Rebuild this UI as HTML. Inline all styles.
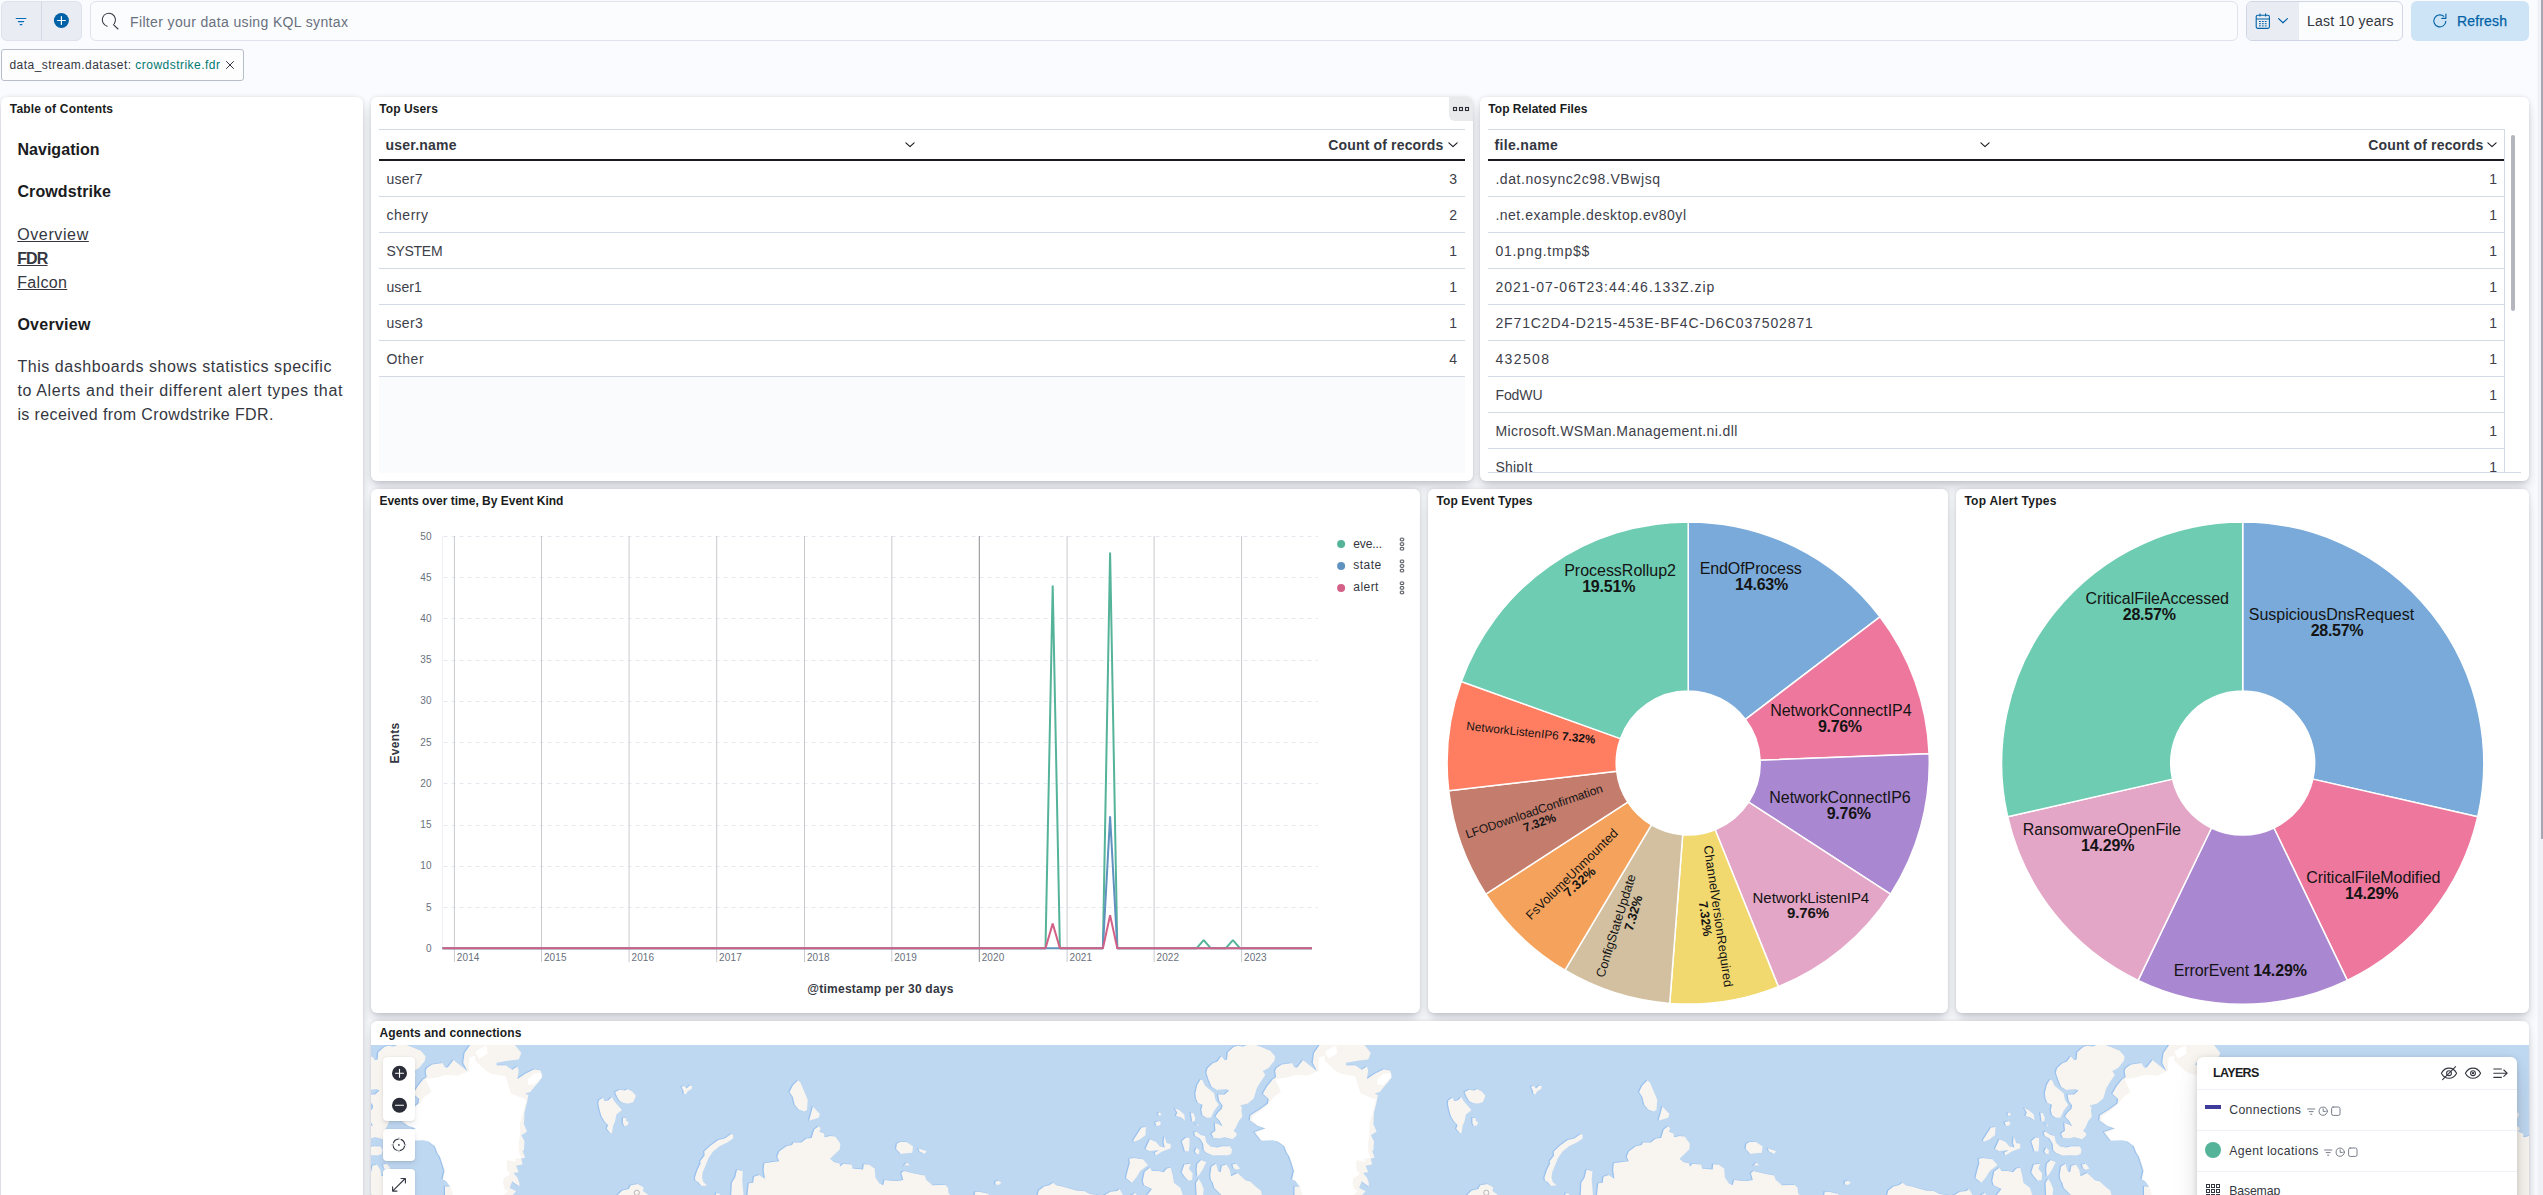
<!DOCTYPE html>
<html lang="en">
<head>
<meta charset="utf-8">
<title>[Crowdstrike] FDR Overview</title>
<style>

*{box-sizing:border-box;margin:0;padding:0}
html,body{width:2543px;height:1195px;overflow:hidden;background:#fafbfe}
body{font-family:"Liberation Sans",sans-serif;color:#343741;font-size:14px;-webkit-font-smoothing:antialiased}
#app{position:relative;width:2543px;height:1195px;overflow:hidden;background:#fafbfe}
.panel{position:absolute;background:#fff;border-radius:6px;box-shadow:0 .9px 4px -1px rgba(0,0,40,.115),0 2.6px 8px -1px rgba(0,0,40,.09),0 5.7px 12px -1px rgba(0,0,40,.075),0 15px 15px -1px rgba(0,0,40,.06);}
.panel>h2{position:absolute;left:8px;top:3px;font-size:12px;line-height:18px;font-weight:700;color:#1a1c21;white-space:nowrap}
.vscroll{position:absolute;left:2537px;top:0;width:6px;height:1195px;background:linear-gradient(90deg,#f5f6fa 0,#f5f6fa 1px,#f0f1f6 1px)}
.vthumb{position:absolute;left:4px;top:0;width:2px;height:839px;background:#a6a7b2}
svg{display:block;position:absolute;overflow:visible}
svg text{font-family:"Liberation Sans",sans-serif}

</style>
</head>
<body>
<div id="app">
<div class="fgroup" style="position:absolute;left:1px;top:1px;width:81px;height:40px;background:#e9edf3;border:1px solid #dde2ec;border-radius:6px"></div>
<div style="position:absolute;left:41px;top:2px;width:1px;height:38px;background:#d3dae6"></div>
<svg style="left:13px;top:13px" width="16" height="16" viewBox="0 0 16 16"><g stroke="#006bb8" stroke-width="1.2" stroke-linecap="round" fill="none"><path d="M3.2 5.5h9.6M5.4 8.6h5.2M7.2 11.7h1.6"/></g></svg>
<svg style="left:53px;top:13px" width="16" height="16" viewBox="0 0 16 16"><circle cx="8.4" cy="7.5" r="7.5" fill="#0061a6"/><path d="M8.4 3.6v7.8M4.5 7.5h7.8" stroke="#fff" stroke-width="1.2" stroke-linecap="round"/></svg>
<div class="search" style="position:absolute;left:90px;top:1px;width:2148px;height:40px;background:#fbfcfd;border:1px solid #dfe3ee;border-radius:6px"></div>
<svg style="left:0;top:0" width="130" height="42" viewBox="0 0 130 42"><path d="M107.2 26.2A6.600 6.600 0 1 1 114.3 23.600" stroke="#343741" stroke-width="1.050" fill="none" stroke-linecap="round"/><path d="M113.4 24.6l4.600 4.400" stroke="#343741" stroke-width="1.050" stroke-linecap="round"/></svg>
<div style="position:absolute;left:130.00px;top:11.95px;font-size:14px;line-height:21px;font-weight:400;letter-spacing:0.360px;color:#69707d;white-space:nowrap;">Filter your data using KQL syntax</div>
<div style="position:absolute;left:2246px;top:1px;width:157px;height:40px;background:#fbfcfd;border:1px solid #d0d6e6;border-radius:6px;overflow:hidden"><div style="position:absolute;left:0;top:0;width:52px;height:38px;background:#e9edf3"></div></div>
<svg style="left:2255px;top:13px" width="16" height="17" viewBox="0 0 16 17"><g fill="none" stroke="#0061a6" stroke-width="1.1"><rect x="1.2" y="2.2" width="13.2" height="13.2" rx="1.6"/><path d="M1.2 6h13.2M5 0.6v3M10.6 0.6v3"/></g><g fill="#0061a6"><rect x="4" y="8" width="1.8" height="1"/><rect x="6.9" y="8" width="1.8" height="1"/><rect x="9.8" y="8" width="1.8" height="1"/><rect x="4" y="10.2" width="1.8" height="1"/><rect x="6.9" y="10.2" width="1.8" height="1"/><rect x="9.8" y="10.2" width="1.8" height="1"/><rect x="4" y="12.4" width="1.8" height="1"/><rect x="6.9" y="12.4" width="1.8" height="1"/><rect x="9.8" y="12.4" width="1.8" height="1"/></g></svg>
<svg style="left:2277px;top:16px" width="12" height="10" viewBox="0 0 12 10"><path d="M1.6 2.6l4.4 4.2 4.4-4.2" stroke="#0061a6" stroke-width="1.2" fill="none" stroke-linecap="round" stroke-linejoin="round"/></svg>
<div style="position:absolute;left:2307.00px;top:10.95px;font-size:14px;line-height:21px;font-weight:400;letter-spacing:0.213px;color:#343741;white-space:nowrap;">Last 10 years</div>
<div style="position:absolute;left:2411px;top:1px;width:118px;height:40px;background:#cce4f5;border-radius:6px"></div>
<svg style="left:2432px;top:13px" width="16" height="16" viewBox="0 0 16 16"><path d="M13.840 8.400A6 6 0 1 1 11.720 3.280" stroke="#0061a6" stroke-width="1.100" fill="none" stroke-linecap="round"/><path d="M13.900 1.100V5.400H9.800" stroke="#0061a6" stroke-width="1.100" fill="none" stroke-linecap="round" stroke-linejoin="round"/></svg>
<div style="position:absolute;left:2457.00px;top:10.95px;font-size:14px;line-height:21px;font-weight:400;letter-spacing:0.163px;color:#0061a6;white-space:nowrap;-webkit-text-stroke:0.25px #0061a6;">Refresh</div>
<div style="position:absolute;left:1px;top:49px;width:243px;height:32px;background:#fdfdfe;border:1px solid #b7bdca;border-radius:3px"></div>
<div style="position:absolute;left:9.40px;top:56.34px;font-size:12px;line-height:18px;font-weight:400;color:#343741;white-space:nowrap;letter-spacing:0.47px;">data_stream.dataset: <span style="color:#007871">crowdstrike.fdr</span></div>
<svg style="left:225px;top:60px" width="10" height="10" viewBox="0 0 10 10"><path d="M1.2 1.2l7.6 7.6M8.8 1.2L1.2 8.8" stroke="#343741" stroke-width="1" fill="none"/></svg>
<div class="panel" style="left:1px;top:97px;width:362px;height:1110px"></div>
<h2 style="position:absolute;left:9.80px;top:99.84px;font-size:12px;line-height:18px;font-weight:700;letter-spacing:0.172px;color:#1a1c21;white-space:nowrap;">Table of Contents</h2>
<h3 style="position:absolute;left:17.40px;top:137.86px;font-size:16px;line-height:24px;font-weight:700;letter-spacing:0.046px;color:#1a1c21;white-space:nowrap;">Navigation</h3>
<h3 style="position:absolute;left:17.40px;top:180.16px;font-size:16px;line-height:24px;font-weight:700;letter-spacing:0.113px;color:#1a1c21;white-space:nowrap;">Crowdstrike</h3>
<a style="position:absolute;left:17.20px;top:222.96px;font-size:16px;line-height:24px;font-weight:400;letter-spacing:0.617px;color:#343741;white-space:nowrap;text-decoration:underline;text-decoration-thickness:1px;text-underline-offset:1.4px;">Overview</a>
<a style="position:absolute;left:17.20px;top:247.06px;font-size:16px;line-height:24px;font-weight:700;letter-spacing:-0.842px;color:#343741;white-space:nowrap;text-decoration:underline;text-decoration-thickness:1px;text-underline-offset:1.4px;">FDR</a>
<a style="position:absolute;left:17.20px;top:270.96px;font-size:16px;line-height:24px;font-weight:400;letter-spacing:0.335px;color:#343741;white-space:nowrap;text-decoration:underline;text-decoration-thickness:1px;text-underline-offset:1.4px;">Falcon</a>
<h3 style="position:absolute;left:17.40px;top:312.66px;font-size:16px;line-height:24px;font-weight:700;letter-spacing:0.263px;color:#1a1c21;white-space:nowrap;">Overview</h3>
<p style="position:absolute;left:17.40px;top:355.06px;font-size:16px;line-height:24px;font-weight:400;letter-spacing:0.558px;color:#343741;white-space:nowrap;">This dashboards shows statistics specific</p>
<p style="position:absolute;left:17.40px;top:379.06px;font-size:16px;line-height:24px;font-weight:400;letter-spacing:0.647px;color:#343741;white-space:nowrap;">to Alerts and their different alert types that</p>
<p style="position:absolute;left:17.40px;top:403.06px;font-size:16px;line-height:24px;font-weight:400;letter-spacing:0.387px;color:#343741;white-space:nowrap;">is received from Crowdstrike FDR.</p>
<div class="panel" style="left:371px;top:97px;width:1102px;height:384px"></div>
<h2 style="position:absolute;left:379.30px;top:99.84px;font-size:12px;line-height:18px;font-weight:700;letter-spacing:0.089px;color:#1a1c21;white-space:nowrap;">Top Users</h2>
<div style="position:absolute;left:1449px;top:97px;width:24px;height:24px;background:#e9eaec;border-radius:0 6px 0 6px"></div>
<svg style="left:1453px;top:105px" width="16" height="8" viewBox="0 0 16 8"><g fill="none" stroke="#2b2d37" stroke-width="1.100"><rect x="0.5" y="2.5" width="3" height="3"/><rect x="6.5" y="2.5" width="3" height="3"/><rect x="12.5" y="2.5" width="3" height="3"/></g></svg>
<div style="position:absolute;left:379px;top:129px;width:1086px;height:344px;overflow:hidden">
<div style="position:absolute;left:0;top:0;width:100%;height:1px;background:#d3dae6"></div>
<div style="position:absolute;left:0;top:30px;width:100%;height:2px;background:#1a1c21"></div>
<div style="position:absolute;left:0;top:67px;width:100%;height:1px;background:#d3dae6"></div>
<div style="position:absolute;left:0;top:103px;width:100%;height:1px;background:#d3dae6"></div>
<div style="position:absolute;left:0;top:139px;width:100%;height:1px;background:#d3dae6"></div>
<div style="position:absolute;left:0;top:175px;width:100%;height:1px;background:#d3dae6"></div>
<div style="position:absolute;left:0;top:211px;width:100%;height:1px;background:#d3dae6"></div>
<div style="position:absolute;left:0;top:247px;width:100%;height:1px;background:#d3dae6"></div>
<div style="position:absolute;left:0;top:248px;width:100%;height:96px;background:#fafbfd"></div>
</div>
<div style="position:absolute;left:385.40px;top:134.65px;font-size:14px;line-height:21px;font-weight:700;letter-spacing:0.242px;color:#343741;white-space:nowrap;">user.name</div>
<svg style="left:903.6px;top:141.0px" width="12" height="8" viewBox="0 0 12 8"><path d="M1.900 1.900l4.100 3.700 4.100-3.700" stroke="#1a1c21" stroke-width="1.150" fill="none" stroke-linecap="round" stroke-linejoin="round"/></svg>
<div style="position:absolute;right:1099.50px;text-align:right;top:134.65px;font-size:14px;line-height:21px;font-weight:700;letter-spacing:0.148px;color:#343741;white-space:nowrap;">Count of records</div>
<svg style="left:1447.1px;top:141.0px" width="12" height="8" viewBox="0 0 12 8"><path d="M1.900 1.900l4.100 3.700 4.100-3.700" stroke="#1a1c21" stroke-width="1.150" fill="none" stroke-linecap="round" stroke-linejoin="round"/></svg>
<div style="position:absolute;left:386.40px;top:168.65px;font-size:14px;line-height:21px;font-weight:400;letter-spacing:0.295px;color:#3d404a;white-space:nowrap;">user7</div>
<div style="position:absolute;right:1086.00px;text-align:right;top:168.65px;font-size:14px;line-height:21px;font-weight:400;color:#3d404a;white-space:nowrap;">3</div>
<div style="position:absolute;left:386.40px;top:204.65px;font-size:14px;line-height:21px;font-weight:400;letter-spacing:0.561px;color:#3d404a;white-space:nowrap;">cherry</div>
<div style="position:absolute;right:1086.00px;text-align:right;top:204.65px;font-size:14px;line-height:21px;font-weight:400;color:#3d404a;white-space:nowrap;">2</div>
<div style="position:absolute;left:386.40px;top:240.65px;font-size:14px;line-height:21px;font-weight:400;letter-spacing:-0.273px;color:#3d404a;white-space:nowrap;">SYSTEM</div>
<div style="position:absolute;right:1086.00px;text-align:right;top:240.65px;font-size:14px;line-height:21px;font-weight:400;color:#3d404a;white-space:nowrap;">1</div>
<div style="position:absolute;left:386.40px;top:276.65px;font-size:14px;line-height:21px;font-weight:400;letter-spacing:0.120px;color:#3d404a;white-space:nowrap;">user1</div>
<div style="position:absolute;right:1086.00px;text-align:right;top:276.65px;font-size:14px;line-height:21px;font-weight:400;color:#3d404a;white-space:nowrap;">1</div>
<div style="position:absolute;left:386.40px;top:312.65px;font-size:14px;line-height:21px;font-weight:400;letter-spacing:0.345px;color:#3d404a;white-space:nowrap;">user3</div>
<div style="position:absolute;right:1086.00px;text-align:right;top:312.65px;font-size:14px;line-height:21px;font-weight:400;color:#3d404a;white-space:nowrap;">1</div>
<div style="position:absolute;left:386.40px;top:348.65px;font-size:14px;line-height:21px;font-weight:400;letter-spacing:0.547px;color:#3d404a;white-space:nowrap;">Other</div>
<div style="position:absolute;right:1086.00px;text-align:right;top:348.65px;font-size:14px;line-height:21px;font-weight:400;color:#3d404a;white-space:nowrap;">4</div>
<div class="panel" style="left:1480px;top:97px;width:1049px;height:384px"></div>
<h2 style="position:absolute;left:1488.30px;top:99.84px;font-size:12px;line-height:18px;font-weight:700;letter-spacing:0.034px;color:#1a1c21;white-space:nowrap;">Top Related Files</h2>
<div style="position:absolute;left:1488px;top:129px;width:1017px;height:344px;overflow:hidden">
<div style="position:absolute;left:0;top:0;width:100%;height:1px;background:#d3dae6"></div>
<div style="position:absolute;left:0;top:30px;width:100%;height:2px;background:#1a1c21"></div>
<div style="position:absolute;left:0;top:67px;width:100%;height:1px;background:#d3dae6"></div>
<div style="position:absolute;left:0;top:103px;width:100%;height:1px;background:#d3dae6"></div>
<div style="position:absolute;left:0;top:139px;width:100%;height:1px;background:#d3dae6"></div>
<div style="position:absolute;left:0;top:175px;width:100%;height:1px;background:#d3dae6"></div>
<div style="position:absolute;left:0;top:211px;width:100%;height:1px;background:#d3dae6"></div>
<div style="position:absolute;left:0;top:247px;width:100%;height:1px;background:#d3dae6"></div>
<div style="position:absolute;left:0;top:283px;width:100%;height:1px;background:#d3dae6"></div>
<div style="position:absolute;left:0;top:319px;width:100%;height:1px;background:#d3dae6"></div>
<div style="position:absolute;left:0;top:355px;width:100%;height:1px;background:#d3dae6"></div>
<div style="position:absolute;right:0;top:0;width:1px;height:100%;background:#d3dae6"></div>
</div>
<div style="position:absolute;left:1494.40px;top:134.65px;font-size:14px;line-height:21px;font-weight:700;letter-spacing:0.351px;color:#343741;white-space:nowrap;">file.name</div>
<svg style="left:1978.6px;top:141.0px" width="12" height="8" viewBox="0 0 12 8"><path d="M1.900 1.900l4.100 3.700 4.100-3.700" stroke="#1a1c21" stroke-width="1.150" fill="none" stroke-linecap="round" stroke-linejoin="round"/></svg>
<div style="position:absolute;right:59.50px;text-align:right;top:134.65px;font-size:14px;line-height:21px;font-weight:700;letter-spacing:0.148px;color:#343741;white-space:nowrap;">Count of records</div>
<svg style="left:2486.1px;top:141.0px" width="12" height="8" viewBox="0 0 12 8"><path d="M1.900 1.900l4.100 3.700 4.100-3.700" stroke="#1a1c21" stroke-width="1.150" fill="none" stroke-linecap="round" stroke-linejoin="round"/></svg>
<div style="position:absolute;left:1495.40px;top:168.65px;font-size:14px;line-height:21px;font-weight:400;letter-spacing:0.575px;color:#3d404a;white-space:nowrap;">.dat.nosync2c98.VBwjsq</div>
<div style="position:absolute;right:46.00px;text-align:right;top:168.65px;font-size:14px;line-height:21px;font-weight:400;color:#3d404a;white-space:nowrap;">1</div>
<div style="position:absolute;left:1495.40px;top:204.65px;font-size:14px;line-height:21px;font-weight:400;letter-spacing:0.506px;color:#3d404a;white-space:nowrap;">.net.example.desktop.ev80yl</div>
<div style="position:absolute;right:46.00px;text-align:right;top:204.65px;font-size:14px;line-height:21px;font-weight:400;color:#3d404a;white-space:nowrap;">1</div>
<div style="position:absolute;left:1495.40px;top:240.65px;font-size:14px;line-height:21px;font-weight:400;letter-spacing:0.753px;color:#3d404a;white-space:nowrap;">01.png.tmp$$</div>
<div style="position:absolute;right:46.00px;text-align:right;top:240.65px;font-size:14px;line-height:21px;font-weight:400;color:#3d404a;white-space:nowrap;">1</div>
<div style="position:absolute;left:1495.40px;top:276.65px;font-size:14px;line-height:21px;font-weight:400;letter-spacing:0.991px;color:#3d404a;white-space:nowrap;">2021-07-06T23:44:46.133Z.zip</div>
<div style="position:absolute;right:46.00px;text-align:right;top:276.65px;font-size:14px;line-height:21px;font-weight:400;color:#3d404a;white-space:nowrap;">1</div>
<div style="position:absolute;left:1495.40px;top:312.65px;font-size:14px;line-height:21px;font-weight:400;letter-spacing:0.889px;color:#3d404a;white-space:nowrap;">2F71C2D4-D215-453E-BF4C-D6C037502871</div>
<div style="position:absolute;right:46.00px;text-align:right;top:312.65px;font-size:14px;line-height:21px;font-weight:400;color:#3d404a;white-space:nowrap;">1</div>
<div style="position:absolute;left:1495.40px;top:348.65px;font-size:14px;line-height:21px;font-weight:400;letter-spacing:1.377px;color:#3d404a;white-space:nowrap;">432508</div>
<div style="position:absolute;right:46.00px;text-align:right;top:348.65px;font-size:14px;line-height:21px;font-weight:400;color:#3d404a;white-space:nowrap;">1</div>
<div style="position:absolute;left:1495.40px;top:384.65px;font-size:14px;line-height:21px;font-weight:400;letter-spacing:-0.062px;color:#3d404a;white-space:nowrap;">FodWU</div>
<div style="position:absolute;right:46.00px;text-align:right;top:384.65px;font-size:14px;line-height:21px;font-weight:400;color:#3d404a;white-space:nowrap;">1</div>
<div style="position:absolute;left:1495.40px;top:420.65px;font-size:14px;line-height:21px;font-weight:400;letter-spacing:0.414px;color:#3d404a;white-space:nowrap;">Microsoft.WSMan.Management.ni.dll</div>
<div style="position:absolute;right:46.00px;text-align:right;top:420.65px;font-size:14px;line-height:21px;font-weight:400;color:#3d404a;white-space:nowrap;">1</div>
<div style="position:absolute;left:1488px;top:455.5px;width:1017px;height:16.5px;overflow:hidden">
<div style="position:absolute;left:7.40px;top:1.15px;font-size:14px;line-height:21px;font-weight:400;letter-spacing:0.240px;color:#3d404a;white-space:nowrap;">ShipIt</div>
<div style="position:absolute;right:8.00px;text-align:right;top:1.15px;font-size:14px;line-height:21px;font-weight:400;color:#3d404a;white-space:nowrap;">1</div>
</div>
<div style="position:absolute;left:1488px;top:472px;width:1033px;height:1px;background:#d3dae6"></div>
<div style="position:absolute;left:2510.5px;top:135px;width:4.5px;height:176px;background:#b4b5bd;border-radius:2.5px"></div>
<div class="panel" style="left:371px;top:489px;width:1049px;height:524px"></div>
<h2 style="position:absolute;left:379.40px;top:491.84px;font-size:12px;line-height:18px;font-weight:700;letter-spacing:-0.002px;color:#1a1c21;white-space:nowrap;">Events over time, By Event Kind</h2>
<svg style="left:0;top:0" width="2543" height="1195" viewBox="0 0 2543 1195">
<line x1="442.5" y1="907.5" x2="1318.0" y2="907.5" stroke="#e6e9f1" stroke-width="1" stroke-dasharray="4 4" stroke-dashoffset="-1"/>
<line x1="442.5" y1="866.5" x2="1318.0" y2="866.5" stroke="#e6e9f1" stroke-width="1" stroke-dasharray="4 4" stroke-dashoffset="-1"/>
<line x1="442.5" y1="825.5" x2="1318.0" y2="825.5" stroke="#e6e9f1" stroke-width="1" stroke-dasharray="4 4" stroke-dashoffset="-1"/>
<line x1="442.5" y1="783.5" x2="1318.0" y2="783.5" stroke="#e6e9f1" stroke-width="1" stroke-dasharray="4 4" stroke-dashoffset="-1"/>
<line x1="442.5" y1="742.5" x2="1318.0" y2="742.5" stroke="#e6e9f1" stroke-width="1" stroke-dasharray="4 4" stroke-dashoffset="-1"/>
<line x1="442.5" y1="701.5" x2="1318.0" y2="701.5" stroke="#e6e9f1" stroke-width="1" stroke-dasharray="4 4" stroke-dashoffset="-1"/>
<line x1="442.5" y1="660.5" x2="1318.0" y2="660.5" stroke="#e6e9f1" stroke-width="1" stroke-dasharray="4 4" stroke-dashoffset="-1"/>
<line x1="442.5" y1="618.5" x2="1318.0" y2="618.5" stroke="#e6e9f1" stroke-width="1" stroke-dasharray="4 4" stroke-dashoffset="-1"/>
<line x1="442.5" y1="577.5" x2="1318.0" y2="577.5" stroke="#e6e9f1" stroke-width="1" stroke-dasharray="4 4" stroke-dashoffset="-1"/>
<line x1="442.5" y1="536.5" x2="1318.0" y2="536.5" stroke="#e6e9f1" stroke-width="1" stroke-dasharray="4 4" stroke-dashoffset="-1"/>
<line x1="442.5" y1="536.0" x2="442.5" y2="948.3" stroke="#eef0f5" stroke-width="1"/>
<line x1="454.4" y1="536.0" x2="454.4" y2="962.0" stroke="#c9cacd" stroke-width="1"/>
<text x="456.8" y="961.2" font-size="10" fill="#69707d" letter-spacing="0.12">2014</text>
<line x1="541.5" y1="536.0" x2="541.5" y2="962.0" stroke="#c9cacd" stroke-width="1"/>
<text x="543.9" y="961.2" font-size="10" fill="#69707d" letter-spacing="0.12">2015</text>
<line x1="629.1" y1="536.0" x2="629.1" y2="962.0" stroke="#c9cacd" stroke-width="1"/>
<text x="631.5" y="961.2" font-size="10" fill="#69707d" letter-spacing="0.12">2016</text>
<line x1="716.7" y1="536.0" x2="716.7" y2="962.0" stroke="#c9cacd" stroke-width="1"/>
<text x="719.1" y="961.2" font-size="10" fill="#69707d" letter-spacing="0.12">2017</text>
<line x1="804.5" y1="536.0" x2="804.5" y2="962.0" stroke="#c9cacd" stroke-width="1"/>
<text x="806.9" y="961.2" font-size="10" fill="#69707d" letter-spacing="0.12">2018</text>
<line x1="891.8" y1="536.0" x2="891.8" y2="962.0" stroke="#c9cacd" stroke-width="1"/>
<text x="894.2" y="961.2" font-size="10" fill="#69707d" letter-spacing="0.12">2019</text>
<line x1="979.3" y1="536.0" x2="979.3" y2="962.0" stroke="#8b8c91" stroke-width="1"/>
<text x="981.7" y="961.2" font-size="10" fill="#69707d" letter-spacing="0.12">2020</text>
<line x1="1067.1" y1="536.0" x2="1067.1" y2="962.0" stroke="#c9cacd" stroke-width="1"/>
<text x="1069.5" y="961.2" font-size="10" fill="#69707d" letter-spacing="0.12">2021</text>
<line x1="1154.1" y1="536.0" x2="1154.1" y2="962.0" stroke="#c9cacd" stroke-width="1"/>
<text x="1156.5" y="961.2" font-size="10" fill="#69707d" letter-spacing="0.12">2022</text>
<line x1="1241.6" y1="536.0" x2="1241.6" y2="962.0" stroke="#c9cacd" stroke-width="1"/>
<text x="1244.0" y="961.2" font-size="10" fill="#69707d" letter-spacing="0.12">2023</text>
<text x="431.8" y="951.8" font-size="10" fill="#69707d" text-anchor="end" letter-spacing="0.25">0</text>
<text x="431.8" y="910.6" font-size="10" fill="#69707d" text-anchor="end" letter-spacing="0.25">5</text>
<text x="431.8" y="869.3" font-size="10" fill="#69707d" text-anchor="end" letter-spacing="0.25">10</text>
<text x="431.8" y="828.1" font-size="10" fill="#69707d" text-anchor="end" letter-spacing="0.25">15</text>
<text x="431.8" y="786.9" font-size="10" fill="#69707d" text-anchor="end" letter-spacing="0.25">20</text>
<text x="431.8" y="745.6" font-size="10" fill="#69707d" text-anchor="end" letter-spacing="0.25">25</text>
<text x="431.8" y="704.4" font-size="10" fill="#69707d" text-anchor="end" letter-spacing="0.25">30</text>
<text x="431.8" y="663.2" font-size="10" fill="#69707d" text-anchor="end" letter-spacing="0.25">35</text>
<text x="431.8" y="622.0" font-size="10" fill="#69707d" text-anchor="end" letter-spacing="0.25">40</text>
<text x="431.8" y="580.7" font-size="10" fill="#69707d" text-anchor="end" letter-spacing="0.25">45</text>
<text x="431.8" y="539.5" font-size="10" fill="#69707d" text-anchor="end" letter-spacing="0.25">50</text>
<path d="M442.5 948.3 L1045.5 948.3 L1052.7 585.5 L1059.9 948.3 L1102.9 948.3 L1110.1 552.5 L1117.3 948.3 L1196.5 948.3 L1203.7 940.1 L1210.9 948.3 L1225.7 948.3 L1232.9 940.1 L1240.1 948.3 L1312.0 948.3" fill="none" stroke="#54b399" stroke-width="2" stroke-linejoin="bevel"/>
<path d="M442.5 948.3 L1102.9 948.3 L1110.1 816.4 L1117.3 948.3 L1312.0 948.3" fill="none" stroke="#6092c0" stroke-width="2" stroke-linejoin="bevel"/>
<path d="M442.5 948.3 L1045.5 948.3 L1052.7 923.6 L1059.9 948.3 L1102.9 948.3 L1110.1 915.3 L1117.3 948.3 L1312.0 948.3" fill="none" stroke="#d36086" stroke-width="2" stroke-linejoin="bevel"/>
<text x="880.5" y="993" font-size="12" font-weight="700" fill="#343741" text-anchor="middle" letter-spacing="0.24">@timestamp per 30 days</text>
<text transform="translate(399.3 743) rotate(-90)" font-size="12" font-weight="700" fill="#343741" text-anchor="middle" letter-spacing="0.3">Events</text>
<circle cx="1341.1" cy="544.1" r="4" fill="#54b399"/>
<text x="1353.3" y="547.5" font-size="12" fill="#343741" letter-spacing="-0.1">eve...</text>
<rect x="1400.3" y="538.2" width="3.4" height="2.6" fill="none" stroke="#343741" stroke-width="0.9" rx="0.5"/>
<rect x="1400.3" y="542.8" width="3.4" height="2.6" fill="none" stroke="#343741" stroke-width="0.9" rx="0.5"/>
<rect x="1400.3" y="547.4" width="3.4" height="2.6" fill="none" stroke="#343741" stroke-width="0.9" rx="0.5"/>
<circle cx="1341.1" cy="566.0" r="4" fill="#6092c0"/>
<text x="1353.3" y="569.4" font-size="12" fill="#343741" letter-spacing="0.45">state</text>
<rect x="1400.3" y="560.1" width="3.4" height="2.6" fill="none" stroke="#343741" stroke-width="0.9" rx="0.5"/>
<rect x="1400.3" y="564.7" width="3.4" height="2.6" fill="none" stroke="#343741" stroke-width="0.9" rx="0.5"/>
<rect x="1400.3" y="569.3" width="3.4" height="2.6" fill="none" stroke="#343741" stroke-width="0.9" rx="0.5"/>
<circle cx="1341.1" cy="587.9" r="4" fill="#d36086"/>
<text x="1353.3" y="591.3" font-size="12" fill="#343741" letter-spacing="0.45">alert</text>
<rect x="1400.3" y="582.0" width="3.4" height="2.6" fill="none" stroke="#343741" stroke-width="0.9" rx="0.5"/>
<rect x="1400.3" y="586.6" width="3.4" height="2.6" fill="none" stroke="#343741" stroke-width="0.9" rx="0.5"/>
<rect x="1400.3" y="591.2" width="3.4" height="2.6" fill="none" stroke="#343741" stroke-width="0.9" rx="0.5"/>
</svg>
<div class="panel" style="left:1428px;top:489px;width:520px;height:524px"></div>
<h2 style="position:absolute;left:1436.40px;top:491.84px;font-size:12px;line-height:18px;font-weight:700;letter-spacing:0.126px;color:#1a1c21;white-space:nowrap;">Top Event Types</h2>
<div class="panel" style="left:1956px;top:489px;width:573px;height:524px"></div>
<h2 style="position:absolute;left:1964.40px;top:491.84px;font-size:12px;line-height:18px;font-weight:700;letter-spacing:0.253px;color:#1a1c21;white-space:nowrap;">Top Alert Types</h2>
<svg style="left:0;top:0" width="2543" height="1195" viewBox="0 0 2543 1195">
<path d="M1688.20 521.90 A241.10 241.10 0 0 1 1879.95 616.84 L1745.46 719.35 A72.00 72.00 0 0 0 1688.20 691.00 Z" fill="#79aad9" stroke="#fff" stroke-width="1.5" stroke-linejoin="round"/>
<path d="M1879.95 616.84 A241.10 241.10 0 0 1 1929.12 753.77 L1760.15 760.24 A72.00 72.00 0 0 0 1745.46 719.35 Z" fill="#ee789d" stroke="#fff" stroke-width="1.5" stroke-linejoin="round"/>
<path d="M1929.12 753.77 A241.10 241.10 0 0 1 1890.57 894.05 L1748.63 802.14 A72.00 72.00 0 0 0 1760.15 760.24 Z" fill="#a987d1" stroke="#fff" stroke-width="1.5" stroke-linejoin="round"/>
<path d="M1890.57 894.05 A241.10 241.10 0 0 1 1778.33 986.62 L1715.11 829.78 A72.00 72.00 0 0 0 1748.63 802.14 Z" fill="#e4a6c7" stroke="#fff" stroke-width="1.5" stroke-linejoin="round"/>
<path d="M1778.33 986.62 A241.10 241.10 0 0 1 1669.74 1003.39 L1682.69 834.79 A72.00 72.00 0 0 0 1715.11 829.78 Z" fill="#f1d86f" stroke="#fff" stroke-width="1.5" stroke-linejoin="round"/>
<path d="M1669.74 1003.39 A241.10 241.10 0 0 1 1564.99 970.24 L1651.41 824.89 A72.00 72.00 0 0 0 1682.69 834.79 Z" fill="#d2c0a0" stroke="#fff" stroke-width="1.5" stroke-linejoin="round"/>
<path d="M1564.99 970.24 A241.10 241.10 0 0 1 1485.83 894.05 L1627.77 802.14 A72.00 72.00 0 0 0 1651.41 824.89 Z" fill="#f5a35c" stroke="#fff" stroke-width="1.5" stroke-linejoin="round"/>
<path d="M1485.83 894.05 A241.10 241.10 0 0 1 1448.69 790.65 L1616.68 771.26 A72.00 72.00 0 0 0 1627.77 802.14 Z" fill="#c47c6c" stroke="#fff" stroke-width="1.5" stroke-linejoin="round"/>
<path d="M1448.69 790.65 A241.10 241.10 0 0 1 1461.29 681.50 L1620.44 738.66 A72.00 72.00 0 0 0 1616.68 771.26 Z" fill="#ff7e62" stroke="#fff" stroke-width="1.5" stroke-linejoin="round"/>
<path d="M1461.29 681.50 A241.10 241.10 0 0 1 1688.20 521.90 L1688.20 691.00 A72.00 72.00 0 0 0 1620.44 738.66 Z" fill="#6dccb1" stroke="#fff" stroke-width="1.5" stroke-linejoin="round"/>
<text x="1564.2" y="576.0" font-size="16" fill="#141414" letter-spacing="-0.020">ProcessRollup2</text>
<text x="1582.2" y="592.0" font-size="16" font-weight="700" fill="#141414" letter-spacing="-0.213">19.51%</text>
<text x="1699.7" y="574.0" font-size="16" fill="#141414" letter-spacing="-0.096">EndOfProcess</text>
<text x="1735.0" y="590.3" font-size="16" font-weight="700" fill="#141414" letter-spacing="-0.193">14.63%</text>
<text x="1770.2" y="716.3" font-size="16" fill="#141414" letter-spacing="-0.056">NetworkConnectIP4</text>
<text x="1818.0" y="731.9" font-size="16" font-weight="700" fill="#141414" letter-spacing="-0.342">9.76%</text>
<text x="1769.3" y="802.8" font-size="16" fill="#141414" letter-spacing="-0.056">NetworkConnectIP6</text>
<text x="1826.7" y="819.0" font-size="16" font-weight="700" fill="#141414" letter-spacing="-0.267">9.76%</text>
<text x="1752.6" y="903.0" font-size="15" fill="#141414" letter-spacing="-0.064">NetworkListenIP4</text>
<text x="1787.0" y="918.3" font-size="15" font-weight="700" fill="#141414" letter-spacing="-0.133">9.76%</text>
<text transform="translate(1466.1 729.8) rotate(6.16)" font-size="11.75" fill="#141414" letter-spacing="0.042" xml:space="preserve">NetworkListenIP6 <tspan font-weight="700">7.32%</tspan></text>
<text transform="translate(1467.2 838.6) rotate(-18.94)" font-size="12" fill="#141414" letter-spacing="-0.024" xml:space="preserve">LFODownloadConfirmation</text>
<text transform="translate(1524.9 831.9) rotate(-18.97)" font-size="12" font-weight="700" fill="#141414" letter-spacing="-0.047" xml:space="preserve">7.32%</text>
<text transform="translate(1530.9 920.6) rotate(-44.54)" font-size="12.75" fill="#141414" letter-spacing="0.054" xml:space="preserve">FsVolumeUnmounted</text>
<text transform="translate(1568.4 897.8) rotate(-42.01)" font-size="13" font-weight="700" fill="#141414" letter-spacing="0.273" xml:space="preserve">7.32%</text>
<text transform="translate(1603.9 978.3) rotate(-72.65)" font-size="12.75" fill="#141414" letter-spacing="-0.029" xml:space="preserve">ConfigStateUpdate</text>
<text transform="translate(1632.4 931.4) rotate(-73.48)" font-size="12.75" font-weight="700" fill="#141414" letter-spacing="-0.068" xml:space="preserve">7.32%</text>
<text transform="translate(1703.7 846.0) rotate(81.72)" font-size="12.75" fill="#141414" letter-spacing="0.063" xml:space="preserve">ChannelVersionRequired</text>
<text transform="translate(1698.8 901.9) rotate(82.31)" font-size="12.5" font-weight="700" fill="#141414" letter-spacing="-0.082" xml:space="preserve">7.32%</text>
<path d="M2242.70 522.00 A241.10 241.10 0 0 1 2477.76 816.75 L2312.89 779.12 A72.00 72.00 0 0 0 2242.70 691.10 Z" fill="#79aad9" stroke="#fff" stroke-width="1.5" stroke-linejoin="round"/>
<path d="M2477.76 816.75 A241.10 241.10 0 0 1 2347.31 980.32 L2273.94 827.97 A72.00 72.00 0 0 0 2312.89 779.12 Z" fill="#ee789d" stroke="#fff" stroke-width="1.5" stroke-linejoin="round"/>
<path d="M2347.31 980.32 A241.10 241.10 0 0 1 2138.09 980.32 L2211.46 827.97 A72.00 72.00 0 0 0 2273.94 827.97 Z" fill="#a987d1" stroke="#fff" stroke-width="1.5" stroke-linejoin="round"/>
<path d="M2138.09 980.32 A241.10 241.10 0 0 1 2007.64 816.75 L2172.51 779.12 A72.00 72.00 0 0 0 2211.46 827.97 Z" fill="#e4a6c7" stroke="#fff" stroke-width="1.5" stroke-linejoin="round"/>
<path d="M2007.64 816.75 A241.10 241.10 0 0 1 2242.70 522.00 L2242.70 691.10 A72.00 72.00 0 0 0 2172.51 779.12 Z" fill="#6dccb1" stroke="#fff" stroke-width="1.5" stroke-linejoin="round"/>
<text x="2085.6" y="604.2" font-size="16" fill="#141414" letter-spacing="-0.039">CriticalFileAccessed</text>
<text x="2122.7" y="620.0" font-size="16" font-weight="700" fill="#141414" letter-spacing="-0.193">28.57%</text>
<text x="2248.8" y="619.7" font-size="16" fill="#141414" letter-spacing="-0.001">SuspiciousDnsRequest</text>
<text x="2310.7" y="635.5" font-size="16" font-weight="700" fill="#141414" letter-spacing="-0.273">28.57%</text>
<text x="2022.8" y="834.8" font-size="16" fill="#141414" letter-spacing="-0.058">RansomwareOpenFile</text>
<text x="2081.0" y="850.6" font-size="16" font-weight="700" fill="#141414" letter-spacing="-0.173">14.29%</text>
<text x="2306.2" y="882.7" font-size="16" fill="#141414" letter-spacing="-0.050">CriticalFileModified</text>
<text x="2345.0" y="898.5" font-size="16" font-weight="700" fill="#141414" letter-spacing="-0.173">14.29%</text>
<text x="2173.7" y="976.2" font-size="16" fill="#141414" letter-spacing="-0.118" xml:space="preserve">ErrorEvent <tspan font-weight="700">14.29%</tspan></text>
</svg>
<div class="panel" style="left:371px;top:1021px;width:2158px;height:200px;overflow:hidden">
<svg style="left:0;top:24px;overflow:hidden" width="2158" height="176" viewBox="371 1045 2158 176">
<rect x="371" y="1045" width="2158" height="176" fill="#bfd8f1"/>
<defs><g id="wl">
<path d="M598.9 1100.3L602.8 1097.7L604.7 1101.0L608.6 1100.3L611.6 1097.1L614.5 1101.6L618.4 1106.1L622.0 1110.0L616.4 1114.6L615.1 1121.1L613.2 1125.6L611.9 1133.4L609.9 1132.7L606.7 1128.8L608.0 1124.9L604.7 1121.7L601.5 1116.5L599.6 1110.0L598.3 1103.5Z"/>
<path d="M615.1 1091.9L619.7 1089.7L624.8 1090.6L627.4 1089.0L632.0 1091.2L635.9 1095.8L633.3 1102.2L627.4 1103.8L623.5 1102.9L619.7 1101.0L617.1 1097.1Z"/>
<path d="M622.9 1117.8L626.1 1118.2L626.4 1121.1L628.7 1122.3L627.4 1125.6L624.2 1125.9L622.9 1123.0Z"/>
<path d="M681.3 1086.7L684.5 1086.0L686.4 1088.6L689.7 1085.6L692.3 1086.0L691.6 1089.0L687.7 1091.2L685.8 1094.5L683.8 1093.8L683.2 1089.9Z"/>
<path d="M798.0 1080.2L800.6 1082.8L804.5 1091.9L807.7 1099.7L807.0 1110.0L803.8 1111.6L798.6 1109.4L794.7 1104.8L792.8 1097.1L789.5 1091.9L792.8 1085.4Z"/>
<path d="M812.9 1106.4L820.0 1113.9L818.7 1117.8L809.0 1120.7L811.6 1111.3Z"/>
<path d="M694.9 1177.5L697.5 1169.7L700.7 1163.2L700.1 1161.3L704.6 1155.4L704.2 1151.5L710.4 1145.7L718.2 1139.9L724.7 1138.6L731.2 1134.0L733.1 1134.7L733.1 1138.6L727.3 1142.5L719.5 1146.3L713.0 1151.5L708.5 1158.0L705.9 1164.5L702.7 1172.3L702.0 1177.5L703.3 1182.0L707.2 1185.5L701.4 1185.9L698.1 1182.0L695.5 1180.7Z"/>
<path d="M617.1 1195.6L622.2 1190.4L628.7 1189.1L630.7 1185.2L637.8 1184.0L643.6 1187.2L643.0 1191.1L649.5 1195.6Z"/>
<path d="M715.6 1195.6L716.3 1193.0L719.5 1193.7L720.2 1195.6Z"/>
<path d="M731.2 1195.6L731.8 1182.7L735.1 1177.5L737.0 1169.7L742.9 1171.0L742.2 1180.1L743.5 1195.6Z"/>
<path d="M747.4 1195.6L748.7 1183.3L753.2 1182.7L753.9 1176.8L759.1 1174.9L764.9 1178.8L763.6 1169.7L764.3 1163.2L772.7 1161.9L779.2 1161.3L777.2 1156.7L779.2 1151.5L786.3 1146.3L792.1 1145.0L793.4 1142.5L801.2 1142.5L806.4 1138.6L811.6 1137.9L814.2 1129.5L818.7 1126.2L820.7 1128.2L819.4 1131.4L823.9 1133.4L824.6 1137.3L830.0 1136.0L835.2 1136.6L840.4 1143.7L839.7 1149.6L830.0 1158.7L833.9 1161.9L839.1 1163.2L840.4 1166.4L843.0 1163.8L851.4 1164.5L852.7 1168.4L863.1 1169.4L863.7 1164.2L868.9 1164.5L874.7 1168.4L875.4 1177.5L879.3 1183.3L883.2 1185.2L884.5 1180.1L891.0 1180.7L897.4 1181.1L903.3 1180.1L901.3 1172.9L903.9 1171.0L914.3 1173.6L924.7 1175.5L926.0 1179.4L932.5 1185.2L940.2 1185.0L945.4 1185.0L948.0 1187.8L948.7 1193.7L951.9 1195.6Z"/>
<path d="M896.8 1143.7L900.0 1142.1L906.5 1142.1L913.0 1146.3L912.3 1152.8L900.7 1154.1L896.1 1148.9Z"/>
<path d="M918.2 1148.3L926.6 1151.1L924.7 1153.9L919.5 1151.5Z"/>
<path d="M903.9 1165.5L906.8 1162.6L910.0 1165.5Z"/>
<path d="M974.6 1195.6L975.2 1191.7L980.4 1192.0L988.2 1193.7L989.5 1195.6Z"/>
<path d="M995.3 1181.4L998.6 1180.7L1001.4 1182.7L998.6 1185.0L995.3 1184.6Z"/>
<path d="M1037.5 1195.6L1038.8 1190.4L1044.0 1186.5L1049.2 1185.2L1053.1 1182.7L1056.3 1185.2L1062.1 1186.5L1067.3 1188.1L1076.4 1190.4L1084.2 1191.1L1089.4 1193.7L1100.0 1195.6Z"/>
<path d="M1207.6 1067.9L1212.8 1063.3L1217.4 1061.4L1221.3 1056.2L1224.5 1060.1L1227.1 1059.5L1227.7 1052.3L1233.6 1047.1L1237.5 1045.8L1242.7 1046.5L1247.8 1044.7L1255.6 1044.7L1263.4 1047.8L1269.9 1050.4L1275.1 1056.2L1274.4 1060.7L1268.6 1067.9L1262.8 1071.1L1265.3 1075.0L1260.8 1081.5L1256.9 1088.0L1253.7 1098.4L1247.8 1103.5L1240.1 1105.5L1242.0 1107.4L1241.4 1110.7L1242.4 1116.5L1238.8 1121.1L1236.2 1126.9L1233.6 1130.8L1236.8 1133.4L1236.2 1136.0L1232.3 1139.2L1224.5 1137.3L1219.3 1138.6L1213.5 1137.9L1211.5 1133.4L1215.4 1130.8L1214.8 1123.0L1218.7 1124.3L1222.6 1126.2L1219.3 1120.4L1215.4 1116.5L1218.0 1112.6L1221.9 1108.7L1222.6 1105.5L1219.3 1101.0L1218.0 1094.5L1224.5 1094.5L1229.0 1090.6L1225.8 1089.3L1216.7 1089.9L1211.5 1086.7L1208.3 1078.9L1206.3 1072.4Z"/>
<path d="M1195.3 1093.2L1197.3 1084.7L1200.5 1079.6L1202.5 1080.2L1205.0 1085.4L1210.2 1089.9L1214.1 1093.2L1215.4 1099.7L1218.7 1104.8L1214.1 1110.7L1210.9 1117.8L1206.3 1117.8L1202.5 1115.2L1201.2 1110.0L1202.5 1104.8L1197.9 1102.9L1196.0 1098.4Z"/>
<path d="M1157.7 1113.3L1159.7 1112.6L1161.6 1114.6L1159.0 1115.9Z"/>
<path d="M1174.6 1108.1L1179.1 1110.0L1184.3 1114.6L1184.9 1120.4L1180.4 1117.2L1175.9 1115.9L1177.2 1112.6Z"/>
<path d="M1190.8 1112.6L1193.4 1113.3L1195.3 1117.8L1194.7 1121.1L1192.1 1121.4Z"/>
<path d="M1155.1 1122.3L1159.0 1121.1L1161.0 1123.0L1159.7 1125.6L1156.4 1125.9Z"/>
<path d="M1195.3 1123.6L1198.6 1124.9L1197.9 1126.2Z"/>
<path d="M1133.1 1140.5L1141.5 1127.5L1146.0 1127.1L1145.4 1135.3L1140.2 1139.2L1134.4 1141.8Z"/>
<path d="M1145.4 1148.9L1149.9 1139.2L1155.8 1141.8L1159.7 1146.3L1164.8 1147.6L1163.5 1142.5L1164.2 1136.6L1166.8 1143.1L1170.7 1143.7L1170.7 1148.3L1162.2 1151.5L1155.8 1155.4L1154.5 1152.8L1159.0 1150.2L1149.3 1150.9Z"/>
<path d="M1181.7 1141.2L1186.2 1137.3L1189.5 1137.9L1189.5 1145.0L1188.8 1151.5L1184.9 1151.5L1183.0 1145.0Z"/>
<path d="M1194.7 1151.5L1196.6 1147.6L1199.2 1150.2L1199.2 1154.1L1196.6 1154.1Z"/>
<path d="M1194.0 1132.7L1196.0 1131.4L1200.5 1134.7L1205.0 1136.0L1206.3 1142.5L1210.2 1146.3L1216.7 1147.6L1221.9 1146.3L1229.7 1146.3L1232.0 1149.6L1231.2 1154.1L1227.1 1155.4L1220.6 1155.2L1212.8 1155.4L1206.3 1152.8L1203.7 1150.2L1203.1 1143.7L1199.9 1138.6L1195.3 1136.0Z"/>
<path d="M1129.2 1158.7L1133.7 1158.0L1142.8 1159.3L1148.0 1165.1L1140.2 1171.0L1136.3 1177.5L1131.8 1182.7L1125.9 1178.1L1127.9 1169.7L1129.8 1163.2Z"/>
<path d="M1142.8 1180.7L1144.7 1171.6L1149.9 1167.7L1151.9 1171.0L1158.4 1171.0L1163.5 1172.3L1166.8 1168.4L1170.7 1167.7L1172.6 1174.9L1173.9 1182.7L1180.4 1187.8L1183.0 1195.6L1146.7 1195.6L1151.9 1189.1L1144.1 1185.2Z"/>
<path d="M1181.7 1172.3L1184.3 1164.5L1190.8 1163.8L1188.8 1168.4L1192.7 1173.6L1192.1 1180.1L1188.2 1180.7L1184.3 1176.2Z"/>
<path d="M1196.6 1169.7L1197.3 1163.8L1201.2 1160.0L1206.3 1161.9L1202.5 1169.7L1199.2 1174.9L1197.3 1176.2Z"/>
<path d="M1210.2 1174.9L1211.5 1166.4L1216.1 1163.8L1218.0 1171.0L1220.6 1172.3L1221.9 1165.8L1226.4 1164.5L1229.7 1169.7L1231.0 1176.2L1237.5 1172.9L1245.2 1180.1L1250.4 1181.4L1255.6 1186.5L1260.8 1190.4L1262.1 1195.6L1221.9 1195.6L1214.1 1187.8L1212.8 1182.7L1210.9 1180.1Z"/>
<path d="M1232.3 1164.5L1236.2 1163.8L1240.1 1168.4L1236.2 1169.7L1233.6 1168.4Z"/>
<path d="M1196.0 1182.7L1198.6 1178.8L1201.2 1182.7L1203.7 1189.1L1203.1 1195.6L1196.6 1195.6Z"/>
<path d="M1103.9 1195.6L1110.4 1191.7L1116.9 1191.1L1119.5 1189.1L1123.3 1195.6Z"/>
<path d="M1131.1 1195.6L1135.0 1193.0L1137.6 1195.6Z"/>
<path d="M1294.5 1195.6L1294.5 1186.5L1301.0 1186.5L1295.8 1180.7L1291.9 1179.4L1293.9 1171.0L1291.9 1164.5L1289.3 1156.7L1286.7 1152.8L1284.2 1146.3L1277.7 1141.2L1272.5 1139.9L1260.8 1140.5L1254.3 1132.1L1265.3 1128.2L1256.9 1125.6L1249.8 1120.4L1250.4 1115.2L1260.8 1108.7L1267.9 1103.5L1268.6 1099.0L1262.8 1093.8L1267.3 1086.0L1272.5 1079.6L1276.1 1077.0L1275.1 1071.1L1276.4 1067.9L1281.6 1064.6L1291.9 1063.1L1294.5 1067.2L1297.1 1067.5L1303.0 1060.1L1316.8 1071.1L1312.7 1062.7L1314.0 1053.0L1319.8 1044.7L1364.3 1044.7L1370.8 1053.0L1368.2 1059.5L1357.8 1060.7L1346.1 1062.7L1346.1 1065.3L1355.2 1065.3L1361.7 1069.8L1366.9 1066.6L1368.2 1070.5L1366.9 1078.9L1374.7 1073.7L1383.7 1069.2L1390.2 1070.5L1391.8 1077.0L1387.6 1082.8L1382.5 1088.6L1379.9 1091.9L1374.7 1093.4L1377.9 1095.1L1376.6 1102.2L1374.0 1112.6L1373.4 1124.3L1376.6 1131.4L1370.8 1135.3L1374.0 1141.2L1373.4 1150.2L1372.1 1150.9L1374.7 1157.4L1370.8 1158.7L1372.1 1164.5L1365.6 1165.8L1368.2 1172.3L1363.0 1172.9L1366.9 1177.5L1368.8 1182.7L1368.8 1186.5L1361.7 1181.4L1359.1 1187.8L1365.6 1191.1L1361.7 1195.6Z"/>
<path d="M1361.1 1139.2L1363.0 1129.5L1366.2 1136.6Z"/>
</g><g id="wi">
<path d="M1302.3 1195.6L1300.4 1187.8L1295.2 1180.7L1292.6 1179.4L1294.5 1171.0L1292.6 1164.5L1290.0 1156.7L1287.4 1152.8L1284.8 1146.3L1278.3 1141.4L1273.1 1140.2L1262.1 1140.6L1256.3 1132.7L1266.0 1128.6L1257.6 1125.6L1251.7 1119.8L1252.4 1116.5L1261.5 1110.0L1268.6 1104.2L1273.8 1097.1L1280.9 1091.9L1275.1 1078.9L1286.7 1077.6L1294.5 1075.0L1302.3 1075.0L1301.4 1075.0L1307.2 1075.7L1318.3 1071.1L1318.9 1057.5L1324.7 1055.6L1324.7 1060.7L1335.8 1071.1L1341.0 1073.7L1355.2 1076.3L1360.4 1093.2L1376.0 1099.7L1372.7 1112.6L1369.5 1123.0L1369.5 1136.0L1368.2 1142.5L1368.2 1151.5L1370.8 1158.0L1364.3 1158.7L1364.9 1161.9L1356.5 1160.0L1356.5 1171.0L1359.1 1172.3L1359.1 1174.9L1353.3 1178.1L1352.6 1182.7L1353.9 1189.1L1357.8 1191.1L1352.6 1195.6Z"/>
<path d="M1324.7 1051.7L1333.2 1046.5L1336.4 1045.8L1337.1 1053.6L1328.6 1058.8Z"/>
<path d="M1377.3 1078.9L1383.7 1073.7L1390.9 1073.1L1390.9 1077.6L1383.7 1084.7L1377.3 1084.7Z"/>
</g></defs>
<use href="#wl" x="-850.5" y="-0.3" fill="#93beee" stroke="#9dc4ef" stroke-width="0.6" stroke-linejoin="round"/>
<use href="#wl" x="-849.5" y="0" fill="#f8f4f0"/>
<use href="#wi" x="-849.5" y="0" fill="#ffffff"/>
<use href="#wl" x="-1.0" y="-0.3" fill="#93beee" stroke="#9dc4ef" stroke-width="0.6" stroke-linejoin="round"/>
<use href="#wl" x="0.0" y="0" fill="#f8f4f0"/>
<use href="#wi" x="0.0" y="0" fill="#ffffff"/>
<use href="#wl" x="848.5" y="-0.3" fill="#93beee" stroke="#9dc4ef" stroke-width="0.6" stroke-linejoin="round"/>
<use href="#wl" x="849.5" y="0" fill="#f8f4f0"/>
<use href="#wi" x="849.5" y="0" fill="#ffffff"/>
<use href="#wl" x="1698.0" y="-0.3" fill="#93beee" stroke="#9dc4ef" stroke-width="0.6" stroke-linejoin="round"/>
<use href="#wl" x="1699.0" y="0" fill="#f8f4f0"/>
<use href="#wi" x="1699.0" y="0" fill="#ffffff"/>
<circle cx="636.8" cy="1192.8" r="2.6" fill="#f8f4f0" stroke="#a9a8ab" stroke-width="0.8"/>
<circle cx="1486.3" cy="1192.8" r="2.6" fill="#f8f4f0" stroke="#a9a8ab" stroke-width="0.8"/>
</svg>
</div>
<h2 style="position:absolute;left:379.40px;top:1023.84px;font-size:12px;line-height:18px;font-weight:700;letter-spacing:0.126px;color:#1a1c21;white-space:nowrap;">Agents and connections</h2>
<div style="position:absolute;left:383px;top:1057px;width:32px;height:64px;background:#fff;border-radius:4px;box-shadow:0 .7px 1.4px rgba(0,0,0,.07),0 1.9px 4px rgba(0,0,0,.05),0 4.5px 10px rgba(0,0,0,.05);"></div>
<div style="position:absolute;left:383px;top:1129px;width:32px;height:32px;background:#fff;border-radius:4px;box-shadow:0 .7px 1.4px rgba(0,0,0,.07),0 1.9px 4px rgba(0,0,0,.05),0 4.5px 10px rgba(0,0,0,.05);"></div>
<div style="position:absolute;left:383px;top:1169px;width:32px;height:32px;background:#fff;border-radius:4px;box-shadow:0 .7px 1.4px rgba(0,0,0,.07),0 1.9px 4px rgba(0,0,0,.05),0 4.5px 10px rgba(0,0,0,.05);"></div>
<svg style="left:383px;top:1057px" width="32" height="140" viewBox="0 0 32 140">
<circle cx="16.5" cy="16.3" r="7.5" fill="#2b2e38"/><path d="M16.5 12.3v8M12.5 16.3h8" stroke="#fff" stroke-width="1.1" stroke-linecap="round"/>
<circle cx="16.5" cy="48.2" r="7.5" fill="#2b2e38"/><path d="M12.5 48.2h8" stroke="#fff" stroke-width="1.1" stroke-linecap="round"/>
<g stroke="#343741" stroke-width="1.100" fill="none"><circle cx="15.9" cy="87.9" r="5.8" stroke-dasharray="6.9 2.21" stroke-dashoffset="-1.1"/></g><g stroke="#9a9ca5" stroke-width="1.1" fill="none"><path d="M15.9 80.6v2.4M15.9 92.8v2.4M8.6 87.9h2.4M20.8 87.9h2.4"/></g><circle cx="15.9" cy="87.9" r="0.9" fill="#343741"/>
<g stroke="#343741" stroke-width="1.100" fill="none" stroke-linecap="round" stroke-linejoin="round"><path d="M9.8 133.9l12.4-12.4M18 121.5h4.4v4.4M9.600 129.700v4.400h4.400"/></g>
</svg>
<div style="position:absolute;left:2197px;top:1057px;width:320px;height:150px;background:#fff;border-radius:6px 6px 0 0;box-shadow:0 1px 5px rgba(0,0,0,.1),0 3.6px 13px rgba(0,0,0,.07),0 8.4px 23px rgba(0,0,0,.06),0 23px 35px rgba(0,0,0,.05);"></div>
<h2 style="position:absolute;left:2213.10px;top:1064.47px;font-size:12.5px;line-height:19px;font-weight:700;letter-spacing:-0.671px;color:#1a1c21;white-space:nowrap;">LAYERS</h2>
<div style="position:absolute;left:2197px;top:1089px;width:320px;height:1px;background:#eef1f6"></div>
<div style="position:absolute;left:2197px;top:1130px;width:320px;height:1px;background:#eef1f6"></div>
<div style="position:absolute;left:2197px;top:1171px;width:320px;height:1px;background:#eef1f6"></div>
<svg style="left:2440px;top:1064px" width="72" height="18" viewBox="0 0 72 18">
<g stroke="#343741" stroke-width="1.1" fill="none" stroke-linecap="round" stroke-linejoin="round">
<path d="M1.4 9.2C3.2 5.8 6 4.1 9 4.1s5.8 1.7 7.6 5.1C14.800 12.6 12 14.300 9 14.300S3.2 12.6 1.4 9.2z"/><circle cx="9" cy="9.2" r="2.4"/><path d="M2.6 15.600L15.600 2.600"/>
<path d="M25.4 9.2c1.800-3.400 4.600-5.100 7.600-5.100s5.800 1.700 7.600 5.100c-1.800 3.400-4.600 5.100-7.600 5.100s-5.800-1.700-7.600-5.100z"/><circle cx="33" cy="9.2" r="2.4"/><circle cx="33" cy="9.2" r="0.6"/>
<path d="M53.800 5h7.600M53.800 9.200h13.200M53.800 13.400h7.600M63.800 6l3.400 3.200-3.400 3.200"/>
</g></svg>
<div style="position:absolute;left:2205px;top:1105px;width:16px;height:4px;background:#3f3b9b"></div>
<div style="position:absolute;left:2229.20px;top:1100.96px;font-size:12.25px;line-height:18px;font-weight:400;letter-spacing:0.370px;color:#343741;white-space:nowrap;">Connections</div>
<svg style="left:2306.6px;top:1106.0px" width="34" height="10" viewBox="0 0 34 10"><g stroke="#69707d" stroke-width="0.9" fill="none" stroke-linecap="round"><path d="M0.600 3h7.200M2.200 5.600h4M3.600 8.200h1.200"/><circle cx="16.200" cy="5.200" r="4.100"/><path d="M16.200 2.800v2.600h2.200"/><rect x="24.600" y="1" width="8.400" height="8.400" rx="1.600"/></g></svg>
<div style="position:absolute;left:2205px;top:1142px;width:16px;height:16px;border-radius:50%;background:#54b399"></div>
<div style="position:absolute;left:2229.20px;top:1141.76px;font-size:12.25px;line-height:18px;font-weight:400;letter-spacing:0.395px;color:#343741;white-space:nowrap;">Agent locations</div>
<svg style="left:2323.7px;top:1146.6px" width="34" height="10" viewBox="0 0 34 10"><g stroke="#69707d" stroke-width="0.9" fill="none" stroke-linecap="round"><path d="M0.600 3h7.200M2.200 5.600h4M3.600 8.200h1.200"/><circle cx="16.200" cy="5.200" r="4.100"/><path d="M16.200 2.800v2.600h2.200"/><rect x="24.600" y="1" width="8.400" height="8.400" rx="1.600"/></g></svg>
<svg style="left:2206px;top:1184px" width="14" height="14" viewBox="0 0 14 14"><g stroke="#343741" stroke-width="1" fill="none"><rect x="0.5" y="0.5" width="3" height="3"/><rect x="5.500" y="0.5" width="3" height="3"/><rect x="10.500" y="0.5" width="3" height="3"/><rect x="0.5" y="5.500" width="3" height="3"/><rect x="5.500" y="5.500" width="3" height="3"/><rect x="10.500" y="5.500" width="3" height="3"/><rect x="0.5" y="10.500" width="3" height="3"/><rect x="5.500" y="10.500" width="3" height="3"/><rect x="10.500" y="10.500" width="3" height="3"/></g></svg>
<div style="position:absolute;left:2229.20px;top:1181.76px;font-size:12.25px;line-height:18px;font-weight:400;letter-spacing:-0.125px;color:#343741;white-space:nowrap;">Basemap</div>
<div class="vscroll"><div class="vthumb"></div></div>
</div>
</body>
</html>
